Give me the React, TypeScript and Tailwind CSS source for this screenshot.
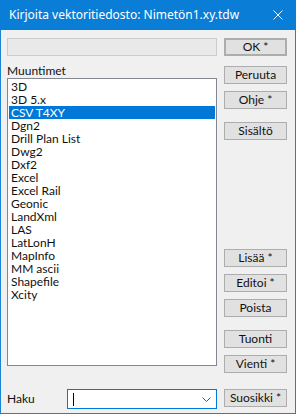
const items = [
  "3D",
  "3D 5.x",
  "CSV T4XY",
  "Dgn2",
  "Drill Plan List",
  "Dwg2",
  "Dxf2",
  "Excel",
  "Excel Rail",
  "Geonic",
  "LandXml",
  "LAS",
  "LatLonH",
  "MapInfo",
  "MM ascii",
  "Shapefile",
  "Xcity",
];

const font = { fontFamily: '"Segoe UI", Lato, "Noto Sans", sans-serif' };
const titleFont = { fontFamily: '"Segoe UI", "Noto Sans", sans-serif' };

function Btn({ label, className = "" }: { label: string; className?: string }) {
  return (
    <div
      className={
        "h-[18px] w-[63px] flex items-center justify-center bg-[#e1e1e1] border border-[#adadad] text-[12px] text-[#111] leading-none " +
        className
      }
    >
      {label}
    </div>
  );
}

export default function App() {
  return (
    <div
      className="w-[296px] h-[414px] bg-[#f0f0f0] border border-t-0 border-[#1883d7] flex flex-col text-[12px] text-[#111]"
      style={font}
    >
      <div className="h-[30px] -mx-px bg-[#0a7dd6] flex items-center justify-between pl-[9px] pr-[7px] text-white shrink-0">
        <span className="text-[12px]" style={titleFont}>
          Kirjoita vektoritiedosto: Nimetön1.xy.tdw
        </span>
        <svg width="10" height="10" viewBox="0 0 10 10" className="mr-[6px]">
          <path d="M0.5 0.5 L9.5 9.5 M9.5 0.5 L0.5 9.5" stroke="white" strokeWidth="1" />
        </svg>
      </div>
      <div className="flex pl-[6px] pt-[8px] gap-[7px]">
        <div className="w-[210px] flex flex-col">
          <div className="h-[18px] bg-[#e9e9e9] border border-[#cccccc]" />
          <div className="mt-[7px] h-[15px] leading-[15px]">Muuntimet</div>
          <div className="h-[288px] bg-white border border-[#828790] pt-px px-px">
            {items.map((it) => (
              <div
                key={it}
                className={
                  "h-[13px] leading-[13px] pl-[2px] " +
                  (it === "CSV T4XY" ? "bg-[#0078d7] text-white" : "")
                }
              >
                {it}
              </div>
            ))}
          </div>
          <div className="mt-[23px] flex items-center h-[20px]">
            <div className="w-[60px]">Haku</div>
            <div className="w-[150px] h-[20px] bg-white border border-[#0078d7] flex items-center justify-between pl-[5px] pr-[5px]">
              <div className="w-px h-[13px] bg-black" />
              <svg width="9" height="5" viewBox="0 0 9 5">
                <path d="M0.5 0.5 L4.5 4.5 L8.5 0.5" stroke="#555" strokeWidth="1" fill="none" />
              </svg>
            </div>
          </div>
        </div>
        <div className="w-[63px] flex flex-col">
          <Btn label="OK *" className="border-2 border-[#0078d7]" />
          <Btn label="Peruuta" className="mt-[10px]" />
          <Btn label="Ohje *" className="mt-[7px]" />
          <Btn label="Sisältö" className="mt-[13px]" />
          <Btn label="Lisää *" className="mt-[109px]" />
          <Btn label="Editoi *" className="mt-[7px]" />
          <Btn label="Poista" className="mt-[7px]" />
          <Btn label="Tuonti" className="mt-[13px]" />
          <Btn label="Vienti *" className="mt-[7px]" />
          <Btn label="Suosikki *" className="mt-[16px]" />
        </div>
      </div>
    </div>
  );
}
